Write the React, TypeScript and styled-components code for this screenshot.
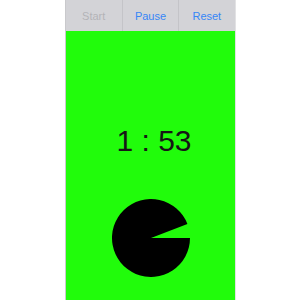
import React from 'react'
import styled, { createGlobalStyle } from 'styled-components'

const GlobalStyle = createGlobalStyle`
  html, body {
    margin: 0;
    padding: 0;
    background: #ffffff;
  }
  body {
    font-family: "Liberation Sans", Arial, sans-serif;
  }
`

const Page = styled.div`
  display: flex;
  justify-content: center;
  height: 300px;
  overflow: hidden;
`

const Phone = styled.div`
  width: 169px;
  display: flex;
  flex-direction: column;
  border-left: 1px solid #c9c9cc;
  border-right: 1px solid #e2e2e4;
`

const Toolbar = styled.div`
  height: 31px;
  display: grid;
  grid-template-columns: repeat(3, 1fr);
  background: #d3d3d7;
`

const ToolButton = styled.div<{ $disabled?: boolean }>`
  display: flex;
  align-items: center;
  justify-content: center;
  font-size: 11px;
  color: ${p => (p.$disabled ? '#b3b3b7' : '#3686f6')};
  & + & {
    border-left: 1px solid #c4c4c8;
  }
`

const Screen = styled.div`
  flex: 1;
  display: flex;
  flex-direction: column;
  align-items: center;
  padding-top: 92px;
  background: #21fc0b;
`

const Time = styled.div`
  font-size: 30px;
  line-height: 36px;
  font-weight: 300;
  color: #161616;
  margin-left: 8px;
`

const Dial = styled.svg`
  margin-top: 40px;
  margin-left: 2px;
`

const total = 120
const left = 113

const Pie = ({ size, fraction }: { size: number; fraction: number }) => {
  const r = size / 2
  const a = fraction * Math.PI * 2
  const x = r + r * Math.cos(a)
  const y = r + r * Math.sin(a)
  const large = fraction > 0.5 ? 1 : 0
  return (
    <Dial width={size} height={size} viewBox={`0 0 ${size} ${size}`}>
      <path d={`M${r} ${r} L${size} ${r} A${r} ${r} 0 ${large} 1 ${x} ${y} Z`} fill="#000" />
    </Dial>
  )
}

const App = () => {
  return (
    <Page>
      <GlobalStyle />
      <Phone>
        <Toolbar>
          <ToolButton $disabled>Start</ToolButton>
          <ToolButton>Pause</ToolButton>
          <ToolButton>Reset</ToolButton>
        </Toolbar>
        <Screen>
          <Time>1 : 53</Time>
          <Pie size={78} fraction={left / total} />
        </Screen>
      </Phone>
    </Page>
  )
}

export default App
